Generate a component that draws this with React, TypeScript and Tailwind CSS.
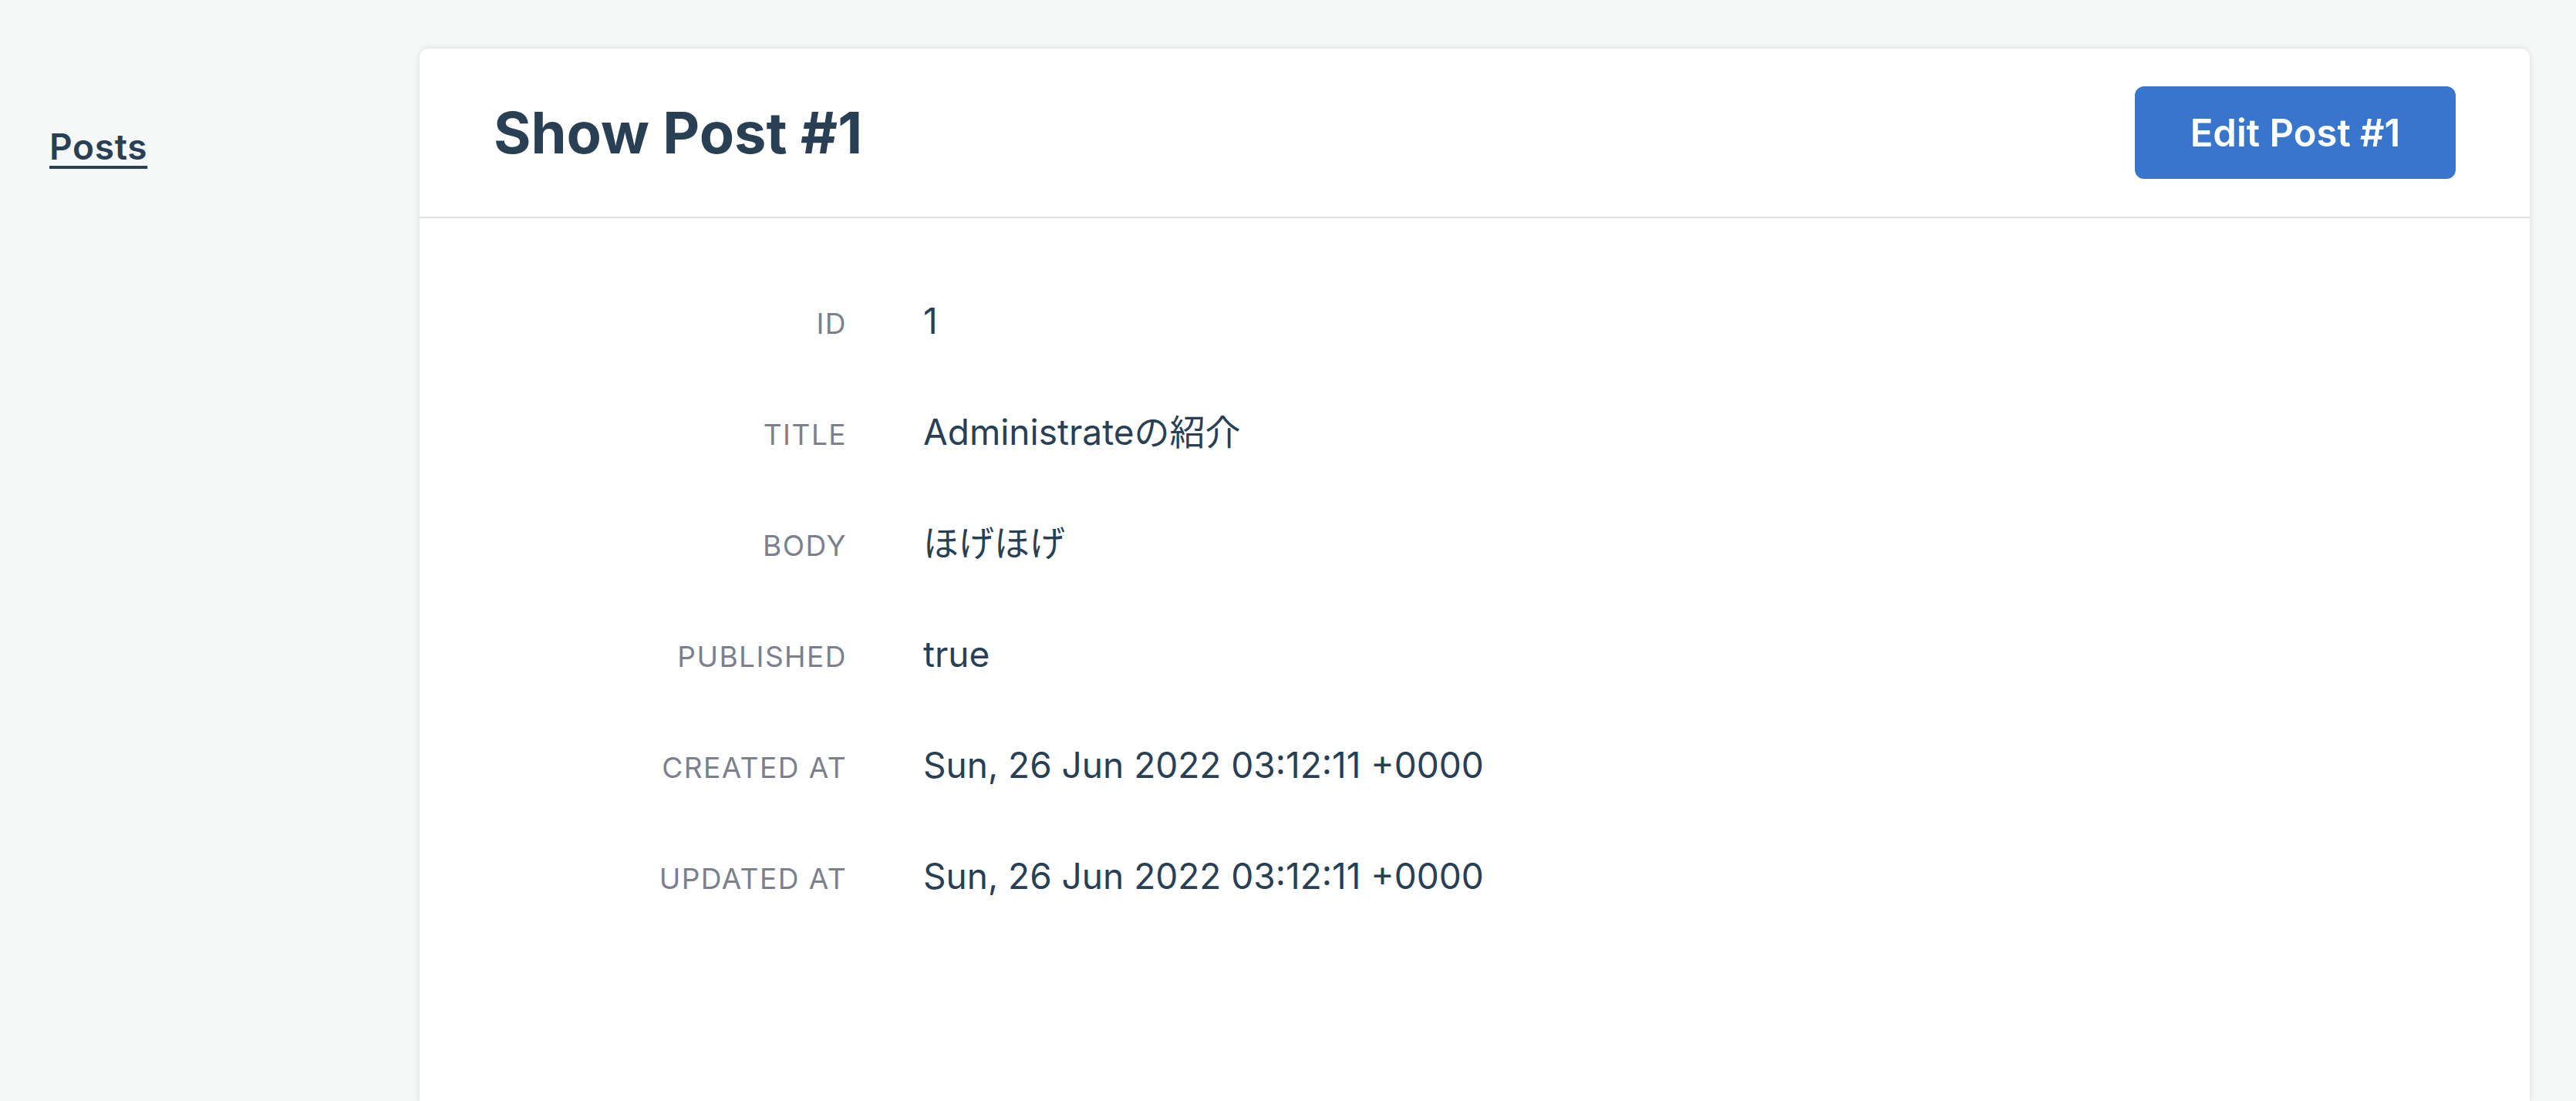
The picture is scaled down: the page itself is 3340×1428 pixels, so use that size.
const rows: { label: string; value: string }[] = [
  { label: 'ID', value: '1' },
  { label: 'Title', value: 'Administrateの紹介' },
  { label: 'Body', value: 'ほげほげ' },
  { label: 'Published', value: 'true' },
  { label: 'Created at', value: 'Sun, 26 Jun 2022 03:12:11 +0000' },
  { label: 'Updated at', value: 'Sun, 26 Jun 2022 03:12:11 +0000' },
];

export default function App() {
  return (
    <div className="flex min-h-screen bg-[#f6f7f7] font-['Inter','Noto_Sans_CJK_JP',sans-serif] text-[#293f54]">
      <nav className="w-[544px] shrink-0 pl-16 pt-[160px]">
        <a
          href="#"
          className="text-[46px] leading-[60px] font-semibold tracking-[0.015em] underline decoration-[4px] underline-offset-[8px]"
        >
          Posts
        </a>
      </nav>
      <main className="mr-[60px] mt-[63px] flex flex-1 flex-col rounded-t-[12px] bg-white shadow-[0_0_8px_rgba(0,0,0,0.12)]">
        <header className="flex h-[220px] items-center justify-between border-b-2 border-[#dfe0e1] px-24">
          <h1 className="text-[74px] leading-none font-bold">Show Post #1</h1>
          <a
            href="#"
            className="flex h-[120px] w-[416px] items-center justify-center rounded-[12px] bg-[#3776cc] text-[49px] leading-none font-semibold text-white"
          >
            Edit Post #1
          </a>
        </header>
        <dl className="flex flex-col pt-[61px]">
          {rows.map((r) => (
            <div key={r.label} className="flex h-[144px] items-baseline gap-x-[99px]">
              <dt className="w-[554px] shrink-0 text-right text-[37px] leading-none tracking-[0.04em] text-[#7b808c] uppercase">
                {r.label}
              </dt>
              <dd className="text-[46px] leading-[144px]">{r.value}</dd>
            </div>
          ))}
        </dl>
      </main>
    </div>
  );
}
